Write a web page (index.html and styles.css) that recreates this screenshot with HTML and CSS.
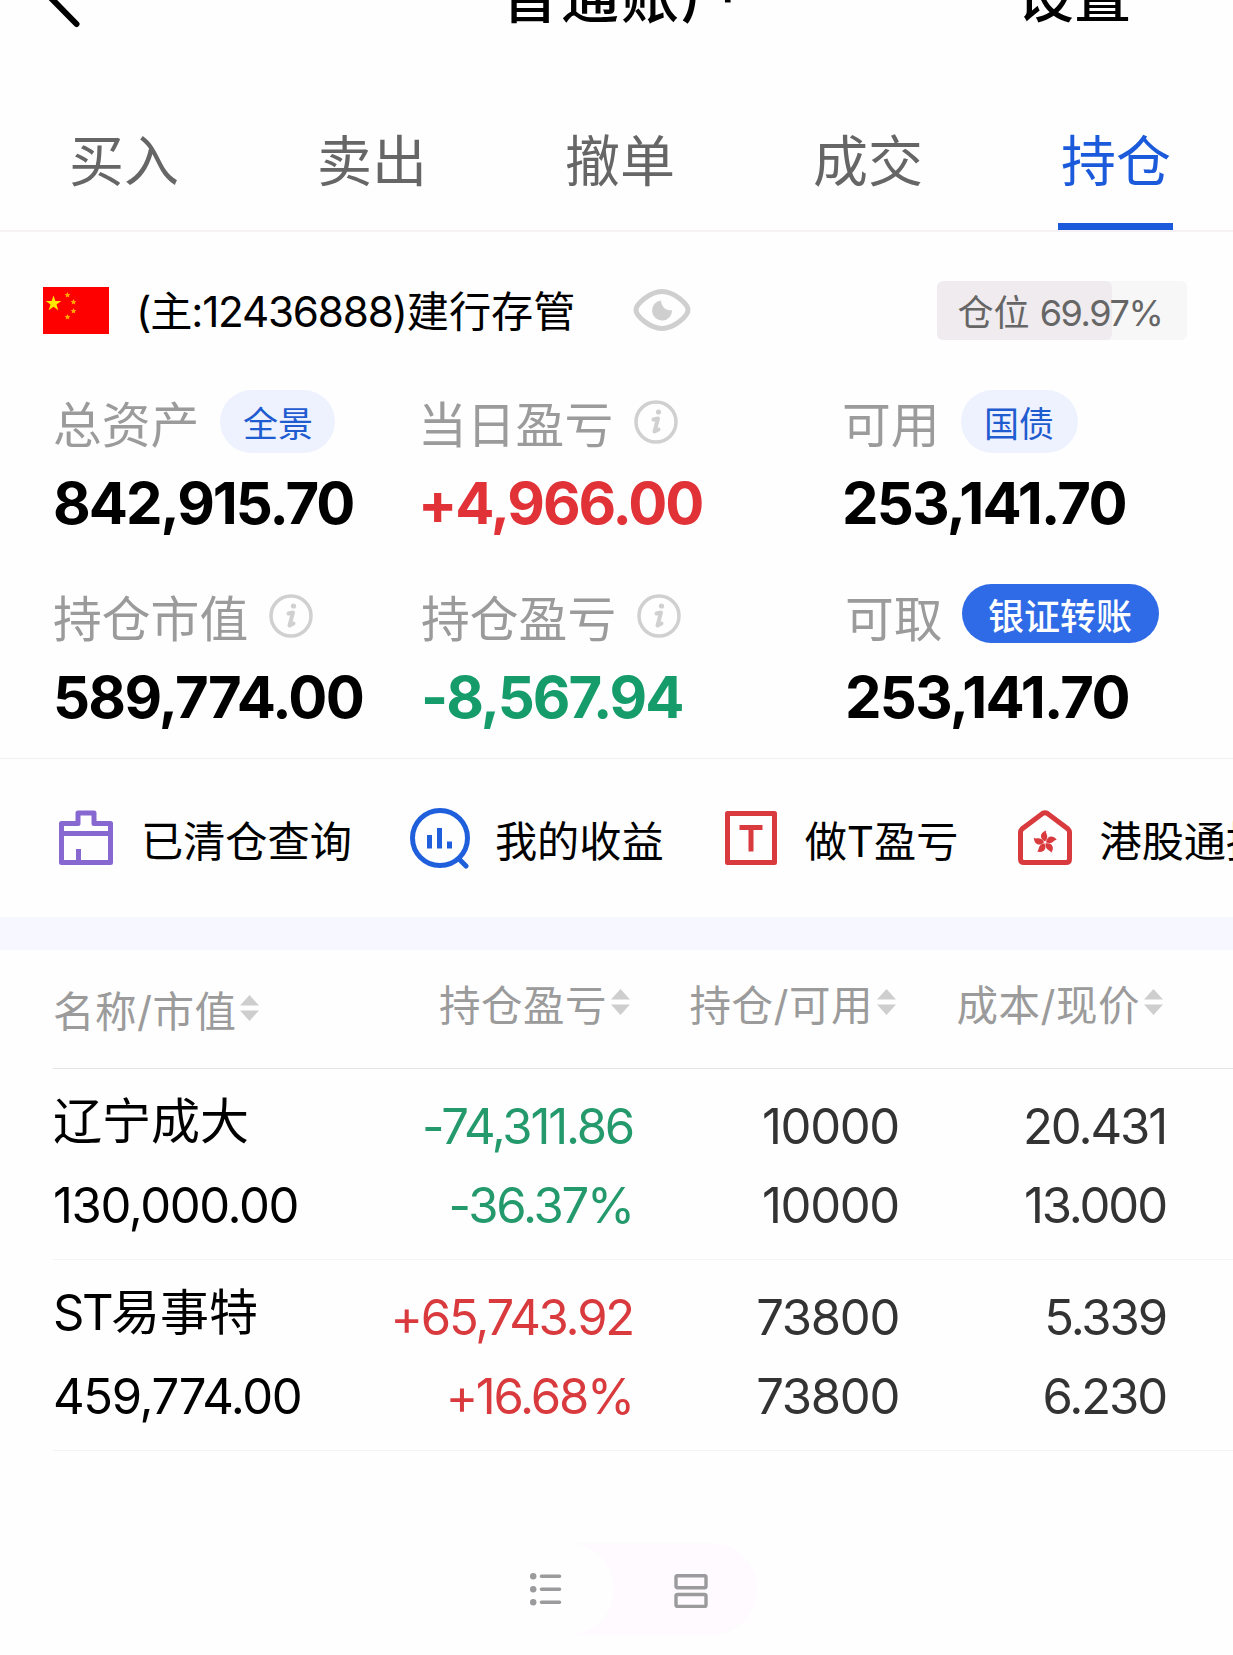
FILE: index.html
```html
<!DOCTYPE html>
<html lang="zh-CN">
  <head>
    <meta charset="UTF-8">
    <meta name="viewport" content="width=device-width, initial-scale=1.0">
    <title>普通账户</title>
    <link rel="stylesheet" href="styles.css">
  </head>
  <body>
    <header class="header">
      <svg class="back" width="80" height="28" viewBox="0 0 80 28"><path d="M48 -5 L76.500 24" fill="none" stroke="#000" stroke-width="6" stroke-linecap="round"/></svg>
      <h1>普通账户</h1>
      <span class="settings">设置</span>
    </header>

    <nav class="tabs">
      <a class="tab">买入</a>
      <a class="tab">卖出</a>
      <a class="tab">撤单</a>
      <a class="tab">成交</a>
      <a class="tab active">持仓</a>
    </nav>

    <section class="account">
      <svg class="flag" width="66" height="47" viewBox="0 0 66 47">
        <rect width="66" height="47" fill="#fe0000"/>
        <path d="M10.500 8.500l1.900 5.600h5.900l-4.800 3.500 1.800 5.600-4.800-3.500-4.800 3.500 1.800-5.600-4.800-3.500h5.900z" fill="#ffe600"/>
        <g fill="#ffa800">
          <path d="M24.500 5l.9 1.900 2 .2-1.500 1.400.4 2-1.800-1-1.800 1 .4-2-1.500-1.400 2-.2z"/>
          <path d="M30.500 12l.9 1.900 2 .2-1.500 1.400.4 2-1.800-1-1.800 1 .4-2-1.500-1.400 2-.2z"/>
          <path d="M30.500 21l.9 1.900 2 .2-1.500 1.400.4 2-1.800-1-1.800 1 .4-2-1.500-1.400 2-.2z"/>
          <path d="M24.500 27l.9 1.900 2 .2-1.500 1.400.4 2-1.800-1-1.800 1 .4-2-1.500-1.400 2-.2z"/>
        </g>
      </svg>
      <span class="account-name"><span class="account-no">(主:12436888)</span>建行存管</span>
      <svg class="eye" width="58" height="44" viewBox="0 0 58 44">
        <path d="M3 22C3 16 17 3.500 29 3.500S55 16 55 22 41 40.500 29 40.500 3 28 3 22z" fill="none" stroke="#cfcfcf" stroke-width="5"/>
        <path d="M28 12.500C28 18 33 23.500 39 22A10 10 0 1 1 28 12.500z" fill="#cfcfcf"/>
      </svg>
      <div class="position">
        <div class="position-fill" style="width: 69.97%"></div>
        <span>仓位 <b>69.97%</b></span>
      </div>
    </section>

    <section class="assets">
      <div class="asset">
        <div class="asset-label"><span>总资产</span><a class="pill">全景</a></div>
        <div class="asset-value">842,915.70</div>
      </div>
      <div class="asset">
        <div class="asset-label"><span>当日盈亏</span>
          <svg class="info" width="44" height="44" viewBox="0 0 44 44"><circle cx="22" cy="22" r="20" fill="none" stroke="#d0d0d0" stroke-width="3.500"/><circle cx="24.500" cy="12" r="2.600" fill="#d0d0d0"/><path d="M19.500 19.500l4.500-1-3.500 13 4-2" fill="none" stroke="#d0d0d0" stroke-width="4" stroke-linecap="round" stroke-linejoin="round"/></svg>
        </div>
        <div class="asset-value up">+4,966.00</div>
      </div>
      <div class="asset">
        <div class="asset-label"><span>可用</span><a class="pill bond">国债</a></div>
        <div class="asset-value cash">253,141.70</div>
      </div>
      <div class="asset">
        <div class="asset-label"><span>持仓市值</span>
          <svg class="info" width="44" height="44" viewBox="0 0 44 44"><circle cx="22" cy="22" r="20" fill="none" stroke="#d0d0d0" stroke-width="3.500"/><circle cx="24.500" cy="12" r="2.600" fill="#d0d0d0"/><path d="M19.500 19.500l4.500-1-3.500 13 4-2" fill="none" stroke="#d0d0d0" stroke-width="4" stroke-linecap="round" stroke-linejoin="round"/></svg>
        </div>
        <div class="asset-value cash">589,774.00</div>
      </div>
      <div class="asset shifted">
        <div class="asset-label"><span>持仓盈亏</span>
          <svg class="info" width="44" height="44" viewBox="0 0 44 44"><circle cx="22" cy="22" r="20" fill="none" stroke="#d0d0d0" stroke-width="3.500"/><circle cx="24.500" cy="12" r="2.600" fill="#d0d0d0"/><path d="M19.500 19.500l4.500-1-3.500 13 4-2" fill="none" stroke="#d0d0d0" stroke-width="4" stroke-linecap="round" stroke-linejoin="round"/></svg>
        </div>
        <div class="asset-value down">-8,567.94</div>
      </div>
      <div class="asset shifted">
        <div class="asset-label"><span>可取</span><a class="transfer">银证转账</a></div>
        <div class="asset-value cash">253,141.70</div>
      </div>
    </section>

    <section class="menu">
      <a class="menu-item cleared">
        <svg width="54" height="56" viewBox="0 0 54 56" fill="none" stroke="#8767d0" stroke-width="5" stroke-linejoin="round">
          <path d="M2.500 13.500H19V3h16v10.500h16.500V52.500h-49zM2.500 23.500h49M19.500 39v13"/>
        </svg>
        <span>已清仓查询</span>
      </a>
      <a class="menu-item income">
        <svg width="60" height="62" viewBox="0 0 60 62" fill="none" stroke="#1f5fdc" stroke-width="5">
          <circle cx="30" cy="31" r="27.500"/>
          <path d="M49 52l7 7" stroke-linecap="round"/>
          <path d="M19.500 28v13.500M29.500 21v20.500M39.500 34.500v7"/>
        </svg>
        <span>我的收益</span>
      </a>
      <a class="menu-item t-trade">
        <svg width="52" height="56" viewBox="0 0 52 56" fill="none" stroke="#d93a3e" stroke-width="5" stroke-linejoin="round">
          <path d="M2.500 3.500h47v49h-47zM14.500 17.500h23M26 17.500v24"/>
        </svg>
        <span>做T盈亏</span>
      </a>
      <a class="menu-item hk">
        <svg width="54" height="56" viewBox="0 0 54 56">
          <path d="M2.500 22.500q0-2 1.500-3.500L24.500 3.500q2.500-1.500 5 0L50 19q1.500 1.500 1.500 3.500V49q0 3.500-3.500 3.500H6q-3.500 0-3.500-3.500z" fill="none" stroke="#d93a3e" stroke-width="5"/>
          <g fill="#d93a3e" transform="translate(27 32.500)">
            <path d="M0 -1C-6 -4-5 -10 1 -12 0 -9 5 -6 0 -1z"/>
            <path d="M0 -1C-6 -4-5 -10 1 -12 0 -9 5 -6 0 -1z" transform="rotate(72)"/>
            <path d="M0 -1C-6 -4-5 -10 1 -12 0 -9 5 -6 0 -1z" transform="rotate(144)"/>
            <path d="M0 -1C-6 -4-5 -10 1 -12 0 -9 5 -6 0 -1z" transform="rotate(216)"/>
            <path d="M0 -1C-6 -4-5 -10 1 -12 0 -9 5 -6 0 -1z" transform="rotate(288)"/>
          </g>
        </svg>
        <span>港股通持仓</span>
      </a>
    </section>

    <main class="holdings">
      <div class="row head">
        <div class="col-name"><span>名称/市值</span><svg width="19" height="26" viewBox="0 0 19 26" fill="#cecece"><path d="M9.500 0L19 10.500H0zM0 15.500h19L9.500 26z"/></svg></div>
        <div><span>持仓盈亏</span><svg width="19" height="26" viewBox="0 0 19 26" fill="#cecece"><path d="M9.500 0L19 10.500H0zM0 15.500h19L9.500 26z"/></svg></div>
        <div><span>持仓/可用</span><svg width="19" height="26" viewBox="0 0 19 26" fill="#cecece"><path d="M9.500 0L19 10.500H0zM0 15.500h19L9.500 26z"/></svg></div>
        <div><span>成本/现价</span><svg width="19" height="26" viewBox="0 0 19 26" fill="#cecece"><path d="M9.500 0L19 10.500H0zM0 15.500h19L9.500 26z"/></svg></div>
      </div>
      <div class="row stock">
        <div class="col-name"><p class="name">辽宁成大</p><p>130,000.00</p></div>
        <div class="profit down"><p>-74,311.86</p><p>-36.37%</p></div>
        <div class="amount"><p>10000</p><p>10000</p></div>
        <div class="price"><p>20.431</p><p>13.000</p></div>
      </div>
      <div class="row stock">
        <div class="col-name"><p class="name"><span class="st">ST</span>易事特</p><p>459,774.00</p></div>
        <div class="profit up"><p>+65,743.92</p><p>+16.68%</p></div>
        <div class="amount"><p>73800</p><p>73800</p></div>
        <div class="price"><p>5.339</p><p>6.230</p></div>
      </div>
    </main>

    <footer class="switch">
      <div class="switch-item selected">
        <svg width="32" height="34" viewBox="0 0 32 34" fill="#9b9a9c" stroke="#9b9a9c" stroke-width="3.600" stroke-linecap="round">
          <path d="M11.500 4.200h18M11.500 17.200h18M11.500 30.200h18"/>
          <g stroke="none"><circle cx="3.200" cy="4.200" r="3.200"/><circle cx="3.200" cy="17.200" r="3.200"/><circle cx="3.200" cy="30.200" r="3.200"/></g>
        </svg>
      </div>
      <div class="switch-item cards">
        <svg width="34" height="34" viewBox="0 0 34 34" fill="none" stroke="#9b9a9c" stroke-width="3.400">
          <rect x="2" y="1.800" width="30" height="12" rx="1.500"/>
          <rect x="2" y="20.500" width="30" height="12" rx="1.500"/>
        </svg>
      </div>
    </footer>
  </body>
</html>
```
FILE: styles.css
```css
body {
  margin: 0;
  background: #fefefe;
  color: #000;
  font-family: Inter, "Noto Sans CJK SC", sans-serif;
  overflow: hidden;
}

h1,
p {
  margin: 0;
  font-weight: inherit;
}

svg {
  flex: none;
  display: block;
}

.header {
  height: 88px;
  display: grid;
  grid-template-columns: 501px 1fr 216px;
}

.header h1,
.settings {
  margin-top: -33px;
  font-size: 58px;
  line-height: 60px;
  font-weight: 500;
  letter-spacing: 2px;
}

.settings {
  font-size: 57px;
  letter-spacing: 0;
}

.tabs {
  display: grid;
  grid-template-columns: repeat(5, 248px);
  height: 142px;
  border-bottom: 2px solid #f5f1f4;
}

.tab {
  position: relative;
  height: 142px;
  text-align: center;
  font-size: 55px;
  line-height: 147px;
  color: #666;
}

.tab.active {
  color: #1b5bdb;
}

.tab.active::after {
  content: "";
  position: absolute;
  left: 66px;
  bottom: 0;
  width: 115px;
  height: 7px;
  background: #1b5bdb;
}

.account {
  display: flex;
  align-items: center;
  height: 62px;
  margin-top: 47px;
  padding: 0 46px 0 43px;
}

.account-name {
  margin-left: 27px;
  font-size: 42.200px;
  line-height: 62px;
  padding-top: 4px;
}

.account-no {
  letter-spacing: -1.200px;
}

.eye {
  margin-left: 58px;
}

.position {
  position: relative;
  margin-left: auto;
  width: 250px;
  height: 59px;
  border-radius: 6px;
  background: #f7f7f8;
  overflow: hidden;
  text-align: center;
  font-size: 36px;
  line-height: 65px;
  color: #666;
}

.position-fill {
  position: absolute;
  left: 0;
  top: 0;
  height: 100%;
  border-radius: 6px;
  background: #efebef;
}

.position span {
  position: relative;
  margin-right: 4px;
}

.position b {
  font-weight: 400;
  letter-spacing: -1.400px;
}

.assets {
  display: grid;
  grid-template-columns: 365px 424px 1fr;
  row-gap: 50px;
  padding: 0 0 30px 53px;
  margin-top: 49px;
  border-bottom: 1px solid #f2f2f2;
}

.asset-label {
  display: flex;
  align-items: center;
  height: 63px;
  color: #9b9b9b;
  font-size: 48.800px;
}

.asset-label span {
  line-height: 60px;
  padding-top: 9px;
}

.info {
  margin-left: 21px;
}

.shifted {
  padding-left: 3px;
}

.pill {
  width: 115px;
  height: 63px;
  margin-left: 21px;
  border-radius: 32px;
  background: #edf2fe;
  color: #1f5cd0;
  font-size: 35px;
  line-height: 69px;
  text-align: center;
}

.bond {
  width: 117px;
}

.transfer {
  width: 197px;
  height: 59px;
  margin: -4px 0 0 19px;
  border-radius: 30px;
  background: #2f6be6;
  color: #fff;
  font-size: 36px;
  font-weight: 500;
  line-height: 66px;
  text-align: center;
}

.asset-value {
  margin-top: 19px;
  font-size: 58px;
  font-weight: 700;
  line-height: 62px;
  letter-spacing: -2px;
}

.cash {
  letter-spacing: -1.700px;
}

.up {
  color: #e13238;
}

.down {
  color: #169c6b;
}

.menu {
  display: flex;
  height: 158px;
  padding-left: 59px;
  overflow: hidden;
  border-bottom: 33px solid #f6f7ff;
}

.menu-item {
  display: flex;
  flex: none;
  align-items: center;
  font-size: 42.200px;
  white-space: nowrap;
}

.menu-item span {
  margin-left: 28px;
}

.income {
  margin-left: 58px;
}

.income span {
  margin-left: 25px;
}

.t-trade {
  margin-left: 61px;
}

.hk {
  margin-left: 60px;
}

.hk span {
  margin-left: 27px;
}

.row {
  display: grid;
  grid-template-columns: 300px 280px 266px 267px;
  margin-left: 53px;
  text-align: right;
}

.head {
  height: 118px;
  border-bottom: 1px solid #e4e4e4;
  color: #9b9b9b;
  font-size: 41.500px;
  line-height: 107px;
}

.head div {
  display: flex;
  align-items: center;
  justify-content: flex-end;
  height: 107px;
  padding-right: 3px;
}

.head span {
  padding-top: 5px;
  letter-spacing: 0.500px;
}

.head svg {
  margin: -3px 0 0 4px;
}

.head .col-name {
  justify-content: flex-start;
  padding-top: 6px;
}

.stock {
  height: 172px;
  padding-top: 18px;
  border-bottom: 1px solid #f4f4f4;
  color: #333;
  font-size: 49px;
  line-height: 79px;
}

.stock .col-name {
  text-align: left;
  color: #000;
  letter-spacing: -1.400px;
}

.stock .name {
  margin: -5px 0 5px;
  letter-spacing: 0;
}

.st {
  letter-spacing: -2.500px;
}

.profit {
  letter-spacing: -2.200px;
}

.amount {
  letter-spacing: -1.300px;
}

.price {
  letter-spacing: -2.100px;
}

.stock .up {
  color: #d93a3e;
}

.stock .down {
  color: #23996c;
}

.switch {
  display: flex;
  width: 277px;
  height: 92px;
  margin: 92px 0 0 480px;
  border-radius: 46px;
  background: #fefaff;
}

.switch-item {
  display: flex;
  flex: 1;
  align-items: center;
  justify-content: center;
}

.switch-item.selected {
  flex: none;
  width: 132px;
  padding-right: 2px;
  border-radius: 46px;
  background: #fefefe;
}

.cards {
  padding: 3px 0 0 11px;
}
```
